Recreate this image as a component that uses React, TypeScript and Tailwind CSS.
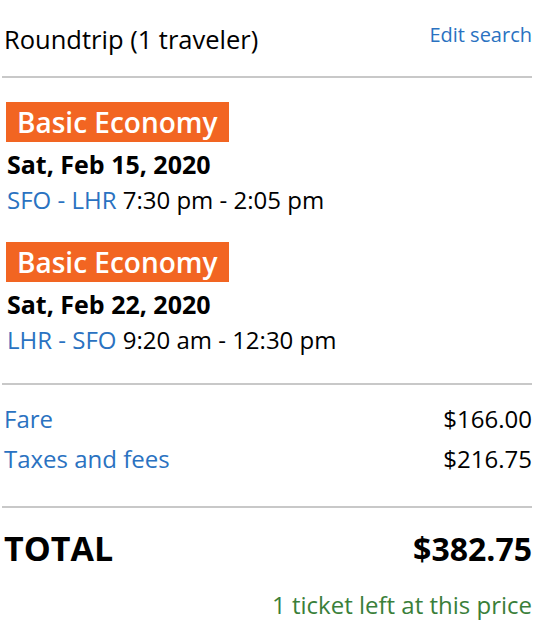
import React from "react";

const FLIGHTS = [
  { date: "Sat, Feb 15, 2020", route: "SFO - LHR", time: "7:30 pm - 2:05 pm" },
  { date: "Sat, Feb 22, 2020", route: "LHR - SFO", time: "9:20 am - 12:30 pm" },
];

export default function App() {
  return (
    <div className="min-h-[638px] w-[548px] bg-white font-['Open_Sans',sans-serif] text-black">
      <div className="ml-[2px] w-[530px]">
        {/* header */}
        <div className="flex items-start justify-between pt-[21px] pl-[2px]">
          <span className="mt-[1px] text-[25.5px] leading-[34px]">Roundtrip (1 traveler)</span>
          <a className="text-[20px] leading-[28px] text-[#2a72c1]">Edit search</a>
        </div>
        <div className="mt-[20px] h-[2px] bg-[#c8c8c8]" />

        {/* flights */}
        <div className="flex flex-col gap-[26px] pt-[24px] pl-[4px]">
          {FLIGHTS.map((f) => (
            <div key={f.date} className="flex flex-col">
              <span className="w-fit bg-[#f26522] px-[11px] text-[28px] font-semibold leading-[40px] text-white">
                Basic Economy
              </span>
              <span className="mt-[5px] pl-[1px] text-[25px] font-bold leading-[34px]">{f.date}</span>
              <span className="mt-[3px] pl-[1px] text-[24px] leading-[32px]">
                <span className="text-[#2a72c1]">{f.route}</span> {f.time}
              </span>
            </div>
          ))}
        </div>
        <div className="mt-[27px] h-[2px] bg-[#c8c8c8]" />

        {/* fare breakdown */}
        <div className="flex flex-col gap-[8px] pt-[18px] pl-[2px] text-[24px] leading-[32px]">
          <div className="flex justify-between">
            <span className="text-[#2a72c1]">Fare</span>
            <span>$166.00</span>
          </div>
          <div className="flex justify-between">
            <span className="text-[#2a72c1]">Taxes and fees</span>
            <span>$216.75</span>
          </div>
        </div>
        <div className="mt-[31px] h-[2px] bg-[#c8c8c8]" />

        {/* total */}
        <div className="flex items-baseline justify-between pt-[18px] pl-[2px] font-bold">
          <span className="text-[34px] leading-[44px]">TOTAL</span>
          <span className="text-[32px] leading-[44px]">$382.75</span>
        </div>
        <div className="mt-[18px] text-right text-[24px] leading-[32px] text-[#3a7f3a]">
          1 ticket left at this price
        </div>
      </div>
    </div>
  );
}
